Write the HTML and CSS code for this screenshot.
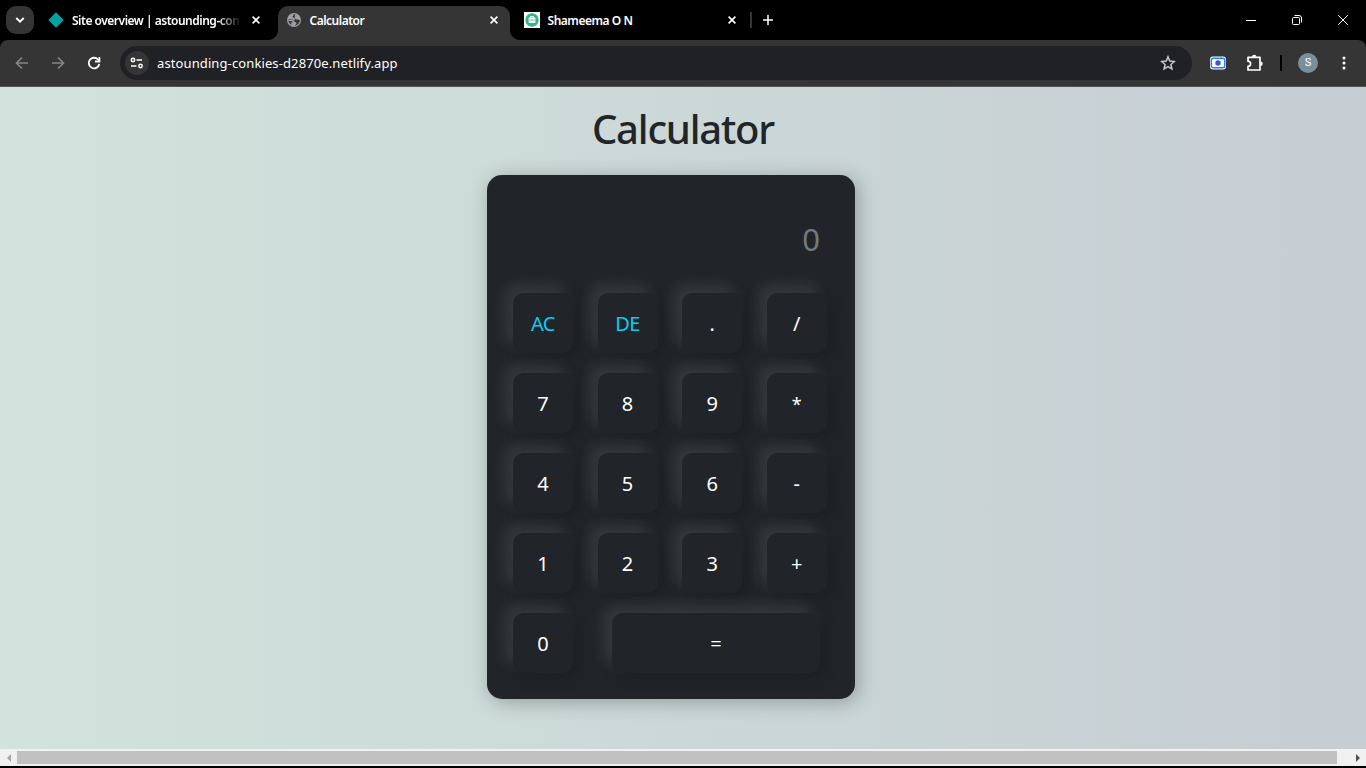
FILE: index.html
```html
<!DOCTYPE html>
<html lang="en">
<head>
<meta charset="utf-8">
<title>Calculator</title>
<link rel="stylesheet" href="styles.css">
</head>
<body>
<header class="tabstrip">
  <button class="tab-search"><svg width="10" height="8" viewBox="0 0 10 8"><path d="M1.3 2 5 5.7 8.700 2" fill="none" stroke="#fff" stroke-width="1.9"/></svg></button>
  <div class="tab tab-first">
    <svg class="favicon" width="16" height="16" viewBox="0 0 16 16"><path d="M8 0.300 15.700 8 8 15.700.3 8Z" fill="#05a3a0"/></svg>
    <span class="tab-title fade"><span class="t-site">Site overview | astounding-con</span></span>
    <svg class="close" width="8" height="8" viewBox="0 0 8 8"><path d="m.6.6 6.800 6.800m0-6.800L.6 7.400"/></svg>
  </div>
  <div class="tab tab-active">
    <svg class="favicon" width="16" height="16" viewBox="0 0 16 16"><circle cx="8" cy="8" r="7" fill="#9aa0a6"/><path d="M9 2C7 2.600 7.800 3.300 6.800 4.200c-.6.700.3 1.500 1.300 1.600 1.300.1 1.100 1.700 2.600 1.700 1.500 0 2 1 3.300.6C13.800 11 11.700 13.200 9 13.700c0-1.400 1.500-1.300 1.500-2.300 0-1-.9-1.300-2-1.300C8.300 8.300 7 8 5.800 8H2.300c0 2.200 1.200 3.800 3 4.700C5.800 11.800 5.400 11 4.500 10.500H6.500V9.500L5 9H2.300V7.500H6C8 7.500 8.500 8.500 8.500 10" fill="#353535"/></svg>
    <span class="tab-title"><span class="t-calc">Calculator</span></span>
    <svg class="close" width="8" height="8" viewBox="0 0 8 8"><path d="m.6.6 6.800 6.800m0-6.800L.6 7.400"/></svg>
  </div>
  <div class="tab tab-last">
    <svg class="favicon" width="16" height="16" viewBox="0 0 16 16"><path fill="#fff" d="M0 0h16v16H0z"/><circle cx="8" cy="8" r="6.700" fill="#30b48d"/><path d="M6.500 5.500v-1h3v1" fill="none" stroke="#fff"/><rect x="4.600" y="5.400" width="6.800" height="5.600" rx=".7" fill="#fff"/><path d="M5 8h6M8 7.300v1.500" stroke="#55c5a4" stroke-width=".8"/></svg>
    <span class="tab-title"><span class="t-name">Shameema O N</span></span>
    <svg class="close" width="8" height="8" viewBox="0 0 8 8"><path d="m.6.6 6.800 6.800m0-6.800L.6 7.400"/></svg>
  </div>
  <i class="divider"></i>
  <svg class="plus" width="10" height="10" viewBox="0 0 10 10"><path d="M5 0v10M0 5h10" stroke="#fff" stroke-width="1.500"/></svg>
  <div class="window-controls">
    <svg width="10" height="10" viewBox="0 0 10 10"><path d="M0 5.500h10"/></svg>
    <svg width="10" height="10" viewBox="0 0 10 10"><rect x=".5" y="2.500" width="7" height="7" rx="1"/><path d="M2.500.5H7A2.500 2.500 0 0 1 9.500 3v4.500"/></svg>
    <svg width="10" height="10" viewBox="0 0 10 10"><path d="m.2.2 9.600 9.600m0-9.600L.2 9.800"/></svg>
  </div>
</header>
<nav class="toolbar">
  <svg class="nav-icon" width="14" height="14" viewBox="0 0 14 14"><path d="M13 7H2m5-5.500L1.500 7 7 12.500" stroke="#858585"/></svg>
  <svg class="nav-icon" width="14" height="14" viewBox="0 0 14 14"><path d="M1 7h11M7 1.500 12.500 7 7 12.500" stroke="#858585"/></svg>
  <svg class="nav-icon" width="14" height="14" viewBox="0 0 14 14"><path d="M12.300 7.800A5.300 5.300 0 1 1 11 3.500L12.300 5" stroke="#fff" stroke-width="1.800"/><path d="M12.400 1v4.500H8" stroke="#fff" stroke-width="1.800"/></svg>
  <div class="address">
    <span class="site-info"><svg width="14" height="14" viewBox="0 0 14 14"><circle cx="3" cy="4" r="1.700"/><path d="M6.500 4H12M1 10h5.500"/><circle cx="10.500" cy="10" r="1.700"/></svg></span>
    <span class="url">astounding-conkies-d2870e.netlify.app</span>
    <svg class="star" width="16" height="16" viewBox="0 0 16 16"><path d="m8 1.800 1.750 4.300 4.650.4-3.500 3 1.050 4.500L8 11.600 4.050 14 5.100 9.500 1.600 6.500l4.650-.4Z"/></svg>
  </div>
  <svg class="recorder" width="16" height="14" viewBox="0 0 16 14"><rect width="16" height="13" y=".5" rx="3" fill="#fff"/><rect x="1.300" y="2.200" width="13.400" height="9.600" rx="2" fill="#fff" stroke="#1683f8" stroke-width="1.400"/><circle cx="8" cy="7" r="2.700" fill="#4753c4"/></svg>
  <svg class="puzzle" width="18" height="18" viewBox="0 0 18 18"><path d="M2 3.300h12v12.700H2v-3.600a2.600 2.600 0 0 0 0-5.200Z" fill="none" stroke="#fff" stroke-width="1.700" stroke-linejoin="round"/><path d="M6 3a2.200 2.200 0 0 1 4.400 0Z" fill="#fff"/><path d="M14.500 7.500a2.200 2.200 0 0 1 0 4.400Z" fill="#fff"/></svg>
  <i class="tool-divider"></i>
  <span class="avatar">S</span>
  <svg class="more" width="4" height="16" viewBox="0 0 4 16"><g fill="#fff"><circle cx="2" cy="3" r="1.500"/><circle cx="2" cy="8" r="1.500"/><circle cx="2" cy="13" r="1.500"/></g></svg>
</nav>
<main class="page">
  <h1 class="heading"><span>Calculator</span></h1>
  <section class="calculator">
    <div class="display">0</div>
    <div class="row"><button class="key accent">AC</button><button class="key accent">DE</button><button class="key">.</button><button class="key">/</button></div>
    <div class="row"><button class="key">7</button><button class="key">8</button><button class="key">9</button><button class="key star-key">*</button></div>
    <div class="row"><button class="key">4</button><button class="key">5</button><button class="key">6</button><button class="key">-</button></div>
    <div class="row"><button class="key">1</button><button class="key">2</button><button class="key">3</button><button class="key">+</button></div>
    <div class="row last"><button class="key">0</button><button class="key equals">=</button></div>
  </section>
</main>
<div class="scrollbar">
  <span class="arrow"><svg width="4" height="8" viewBox="0 0 4 8"><path d="M4 0v8L0 4Z" fill="#a3a3a3"/></svg></span>
  <span class="thumb"></span>
  <span class="arrow arrow-right"><svg width="4" height="8" viewBox="0 0 4 8"><path d="M0 0v8l4-4Z" fill="#505050"/></svg></span>
</div>
</body>
</html>
```
FILE: styles.css
```css
* { box-sizing: border-box; }
body { margin: 0; width: 1366px; height: 768px; overflow: hidden; display: flex; flex-direction: column; background: #000; font-family: "Noto Sans", "Open Sans", sans-serif; }
button { border: 0; padding: 0; font-family: inherit; }
svg { flex: none; display: block; }
.tabstrip { height: 40px; display: flex; align-items: center; background: #000; }
.tab-search { width: 28px; height: 28px; margin-left: 6px; border-radius: 10px; background: #353535; display: flex; align-items: center; justify-content: center; }
.tab { height: 40px; display: flex; align-items: center; color: #fff; }
.tab-first { width: 230px; margin-left: 14px; }
.tab-active { position: relative; width: 232px; height: 34px; margin-top: 6px; padding: 0 0 6px 8px; background: #353535; border-radius: 10px 10px 0 0; }
.tab-active::before, .tab-active::after { content: ""; position: absolute; bottom: 0; width: 10px; height: 10px; }
.tab-active::before { left: -10px; background: radial-gradient(circle at 0 0, transparent 9.5px, #353535 10.500px); }
.tab-active::after { right: -10px; background: radial-gradient(circle at 100% 0, transparent 9.5px, #353535 10.500px); }
.tab-last { width: 240px; padding-left: 14px; }
.tab-title { width: 167px; margin-left: 8px; padding-top: 1px; white-space: nowrap; font-size: 12px; line-height: 18px; font-weight: 600; }
.tab-active .tab-title, .tab-last .tab-title { margin-left: 7.5px; }
.close { margin-left: 13px; fill: none; stroke: #fff; stroke-width: 1.6; }
.fade { -webkit-mask-image: linear-gradient(90deg, #000 145px, transparent 169px); mask-image: linear-gradient(90deg, #000 145px, transparent 169px); }
.t-site { letter-spacing: -.49px; }
.t-calc { letter-spacing: -.5px; }
.t-name { letter-spacing: -.47px; }
.divider { width: 2px; height: 16px; background: #353535; }
.plus { margin-left: 11px; }
.window-controls { margin-left: auto; padding-right: 18px; display: flex; gap: 36px; fill: none; stroke: #fff; stroke-width: 1; }
.toolbar { height: 47px; display: flex; align-items: center; background: #353535; border-bottom: 1px solid #555; border-radius: 8px 8px 0 0; padding-left: 15px; }
.nav-icon { fill: none; stroke-width: 1.7; margin-right: 22px; }
.address { width: 1072px; height: 34px; margin-left: -3px; border-radius: 17px; background: #202124; display: flex; align-items: center; padding: 0 16px 0 5px; }
.site-info { width: 24px; height: 24px; border-radius: 50%; background: #353535; display: flex; align-items: center; justify-content: center; fill: none; stroke: #fff; stroke-width: 1.5; }
.url { margin-left: 8px; flex: 1; color: #fff; font-size: 13px; letter-spacing: .11px; line-height: 18px; }
.star { fill: none; stroke: #c7c7c7; stroke-width: 1.5; }
.recorder { margin-left: 18px; }
.puzzle { margin-left: 20px; }
.tool-divider { width: 2px; height: 16px; margin-left: 16px; background: #000; }
.avatar { width: 20px; height: 20px; margin-left: 16px; border-radius: 50%; background: #78909c; color: #fff; font: 11px/20px Roboto, sans-serif; text-align: center; }
.more { margin-left: 24px; }
.page { height: 662px; background: linear-gradient(90deg, #d1e3dc, #c6cdd3); padding-top: 18px; }
.heading { margin: 0; height: 70px; color: #212529; text-align: center; font-size: 40px; line-height: 48px; font-weight: 500; letter-spacing: -1.2px; }
.calculator { width: 368px; height: 524px; margin-left: 487px; padding: 30px 26px 26px; border-radius: 15px; background: #212529; box-shadow: 3px 3px 20px rgba(0,0,0,.28); }
.display { height: 88px; padding-right: 9px; color: #75787b; text-align: right; font-size: 31px; line-height: 69px; font-weight: 400; }
.row { height: 80px; display: flex; gap: 24.6px; }
.key { width: 60px; height: 60px; flex: none; border-radius: 10px; background: #212529; color: #fff; padding-top: 2px; font-size: 20px; line-height: 58px; box-shadow: -8px -8px 15px rgba(255,255,255,.1), 5px 5px 15px rgba(0,0,0,.2); }
.accent { color: #0dcaf0; letter-spacing: -.5px; }
.star-key { font-size: 18px; }
.last { gap: 39px; }
.equals { width: 208px; }
.scrollbar { height: 17px; background: #f1f1f1; display: flex; align-items: center; }
.arrow { width: 17px; display: flex; justify-content: center; }
.thumb { width: 1320px; height: 13px; background: #c1c1c1; }
.arrow-right { width: 29px; padding-left: 13px; }
```
